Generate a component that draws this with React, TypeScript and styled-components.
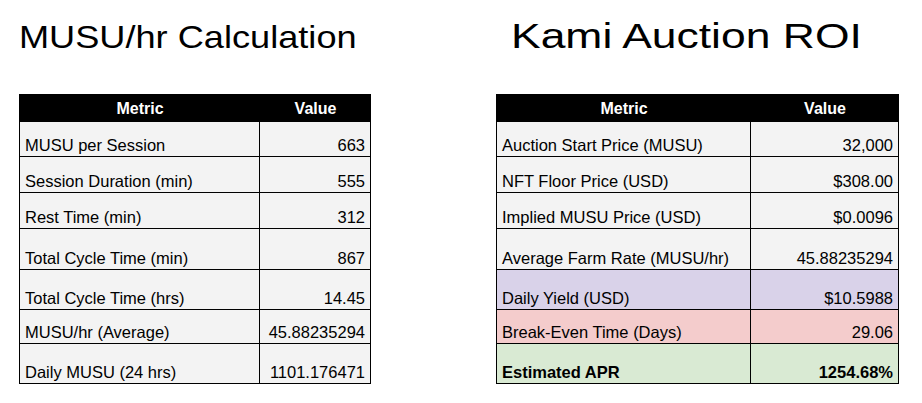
import React from "react";
import styled, { createGlobalStyle } from "styled-components";

const Global = createGlobalStyle`
  html, body { margin: 0; padding: 0; background: #ffffff; }
  body { font-family: "Liberation Sans", Arial, sans-serif; color: #000; overflow: hidden; }
`;

const Page = styled.div`
  width: 922px;
  height: 403px;
  display: flex;
  flex-direction: row;
  align-items: flex-start;
  overflow: hidden;
`;

const Section = styled.section<{ $left: number }>`
  display: flex;
  flex-direction: column;
  margin-left: ${(p) => p.$left}px;
`;

const TitleBox = styled.div`
  height: 94px;
  box-sizing: border-box;
`;

const Title = styled.h1<{ $size: number; $top: number; $indent: number; $scale: number }>`
  margin: 0 0 0 ${(p) => p.$indent}px;
  padding-top: ${(p) => p.$top}px;
  width: max-content;
  font-family: "Liberation Sans", Arial, sans-serif;
  font-weight: 400;
  font-size: ${(p) => p.$size}px;
  line-height: ${(p) => p.$size}px;
  white-space: nowrap;
  color: #000;
  transform: scaleX(${(p) => p.$scale});
  transform-origin: 0 0;
`;

const Table = styled.div`
  display: flex;
  flex-direction: column;
  border-top: 1px solid #000;
  border-left: 1px solid #000;
`;

const Row = styled.div<{ $h: number; $bg: string }>`
  display: grid;
  grid-template-columns: var(--c1) var(--c2);
  height: ${(p) => p.$h}px;
  background: ${(p) => p.$bg};
`;

const HeadCell = styled.div`
  background: #000;
  color: #fff;
  font-weight: 700;
  font-size: 16px;
  line-height: 19px;
  display: flex;
  align-items: center;
  justify-content: center;
  padding-bottom: 1px;
  box-sizing: border-box;
`;

const Cell = styled.div<{ $align: "left" | "right"; $bold?: boolean }>`
  box-sizing: border-box;
  border-right: 1px solid #000;
  border-bottom: 1px solid #000;
  display: flex;
  align-items: flex-end;
  justify-content: ${(p) => (p.$align === "left" ? "flex-start" : "flex-end")};
  padding: 0 5px 1px 5px;
  font-size: 16.5px;
  line-height: 19px;
  font-weight: ${(p) => (p.$bold ? 700 : 400)};
  white-space: nowrap;
  overflow: hidden;
`;

type RowData = { metric: string; value: string; bg?: string; bold?: boolean };

const heights = [35, 36, 36, 41, 40, 34, 40];

const leftRows: RowData[] = [
  { metric: "MUSU per Session", value: "663" },
  { metric: "Session Duration (min)", value: "555" },
  { metric: "Rest Time (min)", value: "312" },
  { metric: "Total Cycle Time (min)", value: "867" },
  { metric: "Total Cycle Time (hrs)", value: "14.45" },
  { metric: "MUSU/hr (Average)", value: "45.88235294" },
  { metric: "Daily MUSU (24 hrs)", value: "1101.176471" },
];

const rightRows: RowData[] = [
  { metric: "Auction Start Price (MUSU)", value: "32,000" },
  { metric: "NFT Floor Price (USD)", value: "$308.00" },
  { metric: "Implied MUSU Price (USD)", value: "$0.0096" },
  { metric: "Average Farm Rate (MUSU/hr)", value: "45.88235294" },
  { metric: "Daily Yield (USD)", value: "$10.5988", bg: "#d9d2e9" },
  { metric: "Break-Even Time (Days)", value: "29.06", bg: "#f4cccc" },
  { metric: "Estimated APR", value: "1254.68%", bg: "#d9ead3", bold: true },
];

function DataTable({ rows, c1, c2 }: { rows: RowData[]; c1: number; c2: number }) {
  return (
    <Table style={{ ["--c1" as any]: `${c1}px`, ["--c2" as any]: `${c2}px` }}>
      <Row $h={27} $bg="#000">
        <HeadCell>Metric</HeadCell>
        <HeadCell>Value</HeadCell>
      </Row>
      {rows.map((r, i) => (
        <Row key={r.metric} $h={heights[i]} $bg={r.bg ?? "#f3f3f3"}>
          <Cell $align="left" $bold={r.bold}>{r.metric}</Cell>
          <Cell $align="right" $bold={r.bold}>{r.value}</Cell>
        </Row>
      ))}
    </Table>
  );
}

export default function App() {
  return (
    <>
      <Global />
      <Page>
        <Section $left={19}>
          <TitleBox>
            <Title $size={32} $top={21} $indent={0} $scale={1.13}>MUSU/hr Calculation</Title>
          </TitleBox>
          <DataTable rows={leftRows} c1={240} c2={111} />
        </Section>
        <Section $left={125}>
          <TitleBox>
            <Title $size={35} $top={18} $indent={15} $scale={1.27}>Kami Auction ROI</Title>
          </TitleBox>
          <DataTable rows={rightRows} c1={254} c2={148} />
        </Section>
      </Page>
    </>
  );
}
